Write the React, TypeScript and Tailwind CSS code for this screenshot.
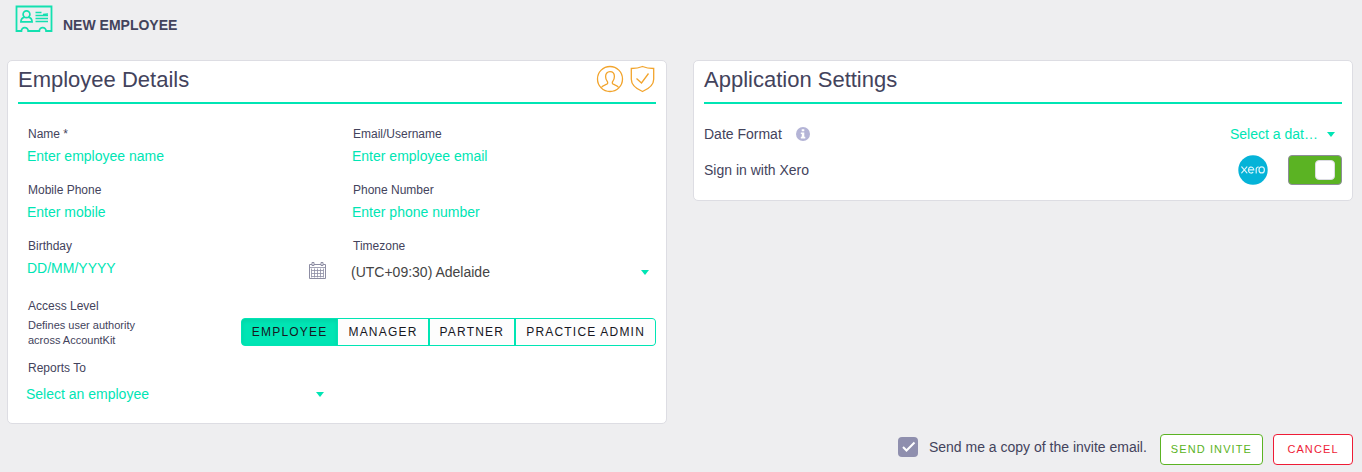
import type { ReactNode } from 'react'

const LEVELS = ['EMPLOYEE', 'MANAGER', 'PARTNER', 'PRACTICE ADMIN']

function BadgeIcon() {
  return (
    <svg className="h-[28px] w-[38px]" viewBox="0 0 38 28" fill="none" stroke="#13e0b0" strokeWidth="1.8" aria-hidden="true">
      <path d="M1.500 1.500h35v24.500h-5.400a3.400 3.400 0 0 0-6.800 0H13.200a3.400 3.400 0 0 0-6.800 0H1.500z" />
      <circle cx="11.500" cy="9.200" r="3.400" strokeWidth="1.700" />
      <path d="M9.700 12.200c-3 .7-3.700 1.700-3.800 4.600h11.200c-.1-2.900-.8-3.900-3.800-4.600" strokeWidth="1.700" />
      <path d="M20.500 7.500h6M20.500 10.500h12.500M20.500 13.500h12.500M20.500 16.500h12.500M28 9.500l5-.5" strokeWidth="1.400" />
    </svg>
  )
}

function UserIcon() {
  return (
    <svg className="size-[28px]" viewBox="0 0 28 28" fill="none" stroke="#f2a42c" strokeWidth="1.3" aria-hidden="true">
      <circle cx="14" cy="14" r="12.5" />
      <path d="M5.3 22.6c.8-2.2 3.500-2.500 5.500-3.400 1.200-.6 1.100-1.900.3-3-1-1.300-1.500-3-1.500-4.600 0-3 1.700-4.900 4.400-4.900s4.400 1.900 4.400 4.900c0 1.600-.5 3.300-1.500 4.600-.8 1.100-.9 2.400.3 3 2 .9 4.700 1.200 5.500 3.400" />
    </svg>
  )
}

function ShieldIcon() {
  return (
    <svg className="h-[28px] w-[26px]" viewBox="0 0 26 28" fill="none" stroke="#f2a42c" strokeWidth="1.3" aria-hidden="true">
      <path d="M12.500 1.500C9 3 5.500 3.500 1.300 3.500v10.700c0 5.800 5 9.600 11.200 12.300 6.200-2.700 11.200-6.500 11.200-12.300V3.500C19.500 3.500 16 3 12.500 1.500z" />
      <path d="M6.500 13.500l5 4.500 7-9.500" />
    </svg>
  )
}

function CalendarIcon() {
  return (
    <svg className="h-[17px] w-[17px]" viewBox="0 0 17 17" fill="none" stroke="#8d8da3" aria-hidden="true">
      <path d="M.5 2.500h16v14H.5z" />
      <path d="M.5 5.500h16M2.500 8.500h12M2.500 11.500h12M2.500 14.500h12M2.500 6.500v9M5.500 6.500v9M8.500 6.500v9M11.500 6.500v9M14.500 6.500v9" strokeWidth=".8" />
      <path d="M3 .5h2v3H3zM12 .5h2v3h-2z" fill="#fff" />
    </svg>
  )
}

function Caret() {
  return (
    <svg className="pointer-events-none col-start-1 row-start-1 mr-[7px] h-[5px] w-2 self-center justify-self-end" viewBox="0 0 8 5" fill="#00e5b4" aria-hidden="true">
      <path d="M0 0h8L4 5z" />
    </svg>
  )
}

function Card({ title, icons, children }: { title: string; icons?: ReactNode; children: ReactNode }) {
  return (
    <section className="rounded-[5px] border border-[#dddde3] bg-white px-2.5">
      <div className="flex h-[43px] items-center justify-between border-b-2 border-[#00e5b4]">
        <h2 className="pb-1 text-[22px] leading-7">{title}</h2>
        {icons}
      </div>
      {children}
    </section>
  )
}

function Field({ id, label, children }: { id: string; label: string; children: ReactNode }) {
  return (
    <div className="flex h-14 flex-col">
      <label htmlFor={id} className="pl-0.5 text-xs leading-4">{label}</label>
      {children}
    </div>
  )
}

const inputClass = 'h-7 w-full min-w-0 bg-transparent pl-px text-sm outline-none placeholder:text-[#00e5b4] placeholder:opacity-100'
const selectClass = 'col-start-1 row-start-1 w-full min-w-0 appearance-none bg-transparent pr-5 text-sm outline-none'

export default function App() {
  return (
    <div className="min-h-screen bg-[#eeeef0] pr-[9px] pl-[7px] font-['Liberation_Sans',Arial,sans-serif] text-[#43435c]">
      <header className="flex h-[60px] items-start gap-2.5 pt-[5px] pl-2">
        <BadgeIcon />
        <h1 className="pt-2.5 text-sm font-bold">NEW EMPLOYEE</h1>
      </header>

      <form onSubmit={(e) => e.preventDefault()}>
        <div className="grid grid-cols-2 items-start gap-[26px]">
          <Card
            title="Employee Details"
            icons={
              <div className="flex items-center gap-1.5 pb-1.5">
                <UserIcon />
                <ShieldIcon />
              </div>
            }
          >
            <div className="grid grid-cols-2 gap-x-5 pt-[22px] pl-2">
              <Field id="name" label="Name *">
                <input id="name" className={inputClass} placeholder="Enter employee name" />
              </Field>
              <Field id="email" label="Email/Username">
                <input id="email" className={inputClass} placeholder="Enter employee email" />
              </Field>
              <Field id="mobile" label="Mobile Phone">
                <input id="mobile" className={inputClass} placeholder="Enter mobile" />
              </Field>
              <Field id="phone" label="Phone Number">
                <input id="phone" className={inputClass} placeholder="Enter phone number" />
              </Field>
              <Field id="birthday" label="Birthday">
                <div className="flex items-center pr-[5px]">
                  <input id="birthday" className={inputClass} placeholder="DD/MM/YYYY" />
                  <button type="button" aria-label="Open calendar" className="pt-1">
                    <CalendarIcon />
                  </button>
                </div>
              </Field>
              <Field id="timezone" label="Timezone">
                <div className="grid h-9">
                  <select id="timezone" className={selectClass + ' text-[#444444]'}>
                    <option>(UTC+09:30) Adelaide</option>
                  </select>
                  <Caret />
                </div>
              </Field>
            </div>

            <div className="flex items-start justify-between pt-1">
              <div className="pl-2.5">
                <div id="access" className="text-xs leading-4">Access Level</div>
                <p className="pt-1 text-[11px] leading-[15px]">
                  Defines user authority
                  <br />
                  across AccountKit
                </p>
              </div>
              <div role="group" aria-labelledby="access" className="mt-5 flex h-7 rounded border border-[#00e5b4] bg-[#00e5b4]">
                {LEVELS.map((level, i) => (
                  <button
                    key={level}
                    type="button"
                    aria-pressed={i === 0}
                    className="bg-[#fdfdfd] px-2.5 text-xs tracking-widest text-[#17171f] not-last:border-r-2 not-last:border-[#00e5b4] last:rounded-r-[3px] aria-pressed:rounded-l-[3px] aria-pressed:border-r aria-pressed:bg-[#00e5b4] aria-pressed:shadow-[inset_0_2px_4px_rgba(0,0,0,0.08)]"
                  >
                    {level}
                  </button>
                ))}
              </div>
            </div>

            <div className="grid grid-cols-2 gap-x-5 pt-3 pb-[7px] pl-2">
              <Field id="reports" label="Reports To">
                <div className="grid h-9">
                  <select id="reports" className={selectClass + ' text-[#00e5b4]'}>
                    <option>Select an employee</option>
                  </select>
                  <Caret />
                </div>
              </Field>
            </div>
          </Card>

          <Card title="Application Settings">
            <div className="mt-3 flex h-9 items-center justify-between">
              <div className="flex items-center gap-3.5">
                <label htmlFor="date-format" className="text-sm">Date Format</label>
                <svg className="size-3.5" viewBox="0 0 14 14" aria-hidden="true">
                  <circle cx="7" cy="7" r="7" fill="#b4b4d6" />
                  <path d="M5.700 2.300h2.600v2H5.700zM4.800 5.500h3.500v4.300h1v1.600H4.800V9.800h1V7.100h-1z" fill="#fff" />
                </svg>
              </div>
              <div className="grid w-28">
                <select id="date-format" className={selectClass + ' text-[#00e5b4]'}>
                  <option>Select a dat…</option>
                </select>
                <Caret />
              </div>
            </div>
            <div className="mb-3 flex h-9 items-center justify-between">
              <label htmlFor="xero" className="text-sm">Sign in with Xero</label>
              <div className="flex items-center gap-5">
                <svg className="size-[30px]" viewBox="0 0 30 30" role="img" aria-label="Xero">
                  <circle cx="15" cy="15" r="14.700" fill="#05b3d8" />
                  <g fill="none" stroke="#d8f3fa" strokeWidth="1.200" strokeLinecap="round">
                    <path d="M3.700 11.900l5.200 6M8.900 11.900l-5.200 6" />
                    <path d="M10.600 14.900h5.200a2.700 3 0 1 0-.9 2.400" />
                    <path d="M18.200 17.900v-3.400q0-2.300 2.200-2.500" />
                    <ellipse cx="23.700" cy="14.900" rx="2.700" ry="3" />
                  </g>
                </svg>
                <input
                  id="xero"
                  type="checkbox"
                  role="switch"
                  defaultChecked
                  className="flex h-[30px] w-[54px] appearance-none items-center rounded border border-[#8d8d98] bg-[#c8c8d0] px-1.5 before:size-5 before:rounded before:border before:border-[#dcdce2] before:bg-white checked:justify-end checked:bg-[#5bb323]"
                />
              </div>
            </div>
          </Card>
        </div>

        <footer className="flex items-start justify-end pt-2.5">
          <div className="flex items-center pt-[3px] pr-[13px]">
            <span className="grid">
              <input id="copy" type="checkbox" defaultChecked className="col-start-1 row-start-1 size-5 appearance-none rounded bg-[#8f8fae]" />
              <svg className="pointer-events-none col-start-1 row-start-1 size-5" viewBox="0 0 20 20" fill="none" stroke="#fff" strokeWidth="2" aria-hidden="true">
                <path d="M5 10l3.500 3.500L16.500 5.500" />
              </svg>
            </span>
            <label htmlFor="copy" className="pl-[11px] text-sm">Send me a copy of the invite email.</label>
          </div>
          <button type="submit" className="mr-2.5 h-[31px] rounded border border-[#5bb323] bg-white px-2.5 text-[11px] tracking-widest text-[#5bb323]">
            SEND INVITE
          </button>
          <button type="button" className="h-[31px] w-20 rounded border border-[#ee1c36] bg-white text-[11px] tracking-widest text-[#ee1c36]">
            CANCEL
          </button>
        </footer>
      </form>
    </div>
  )
}
